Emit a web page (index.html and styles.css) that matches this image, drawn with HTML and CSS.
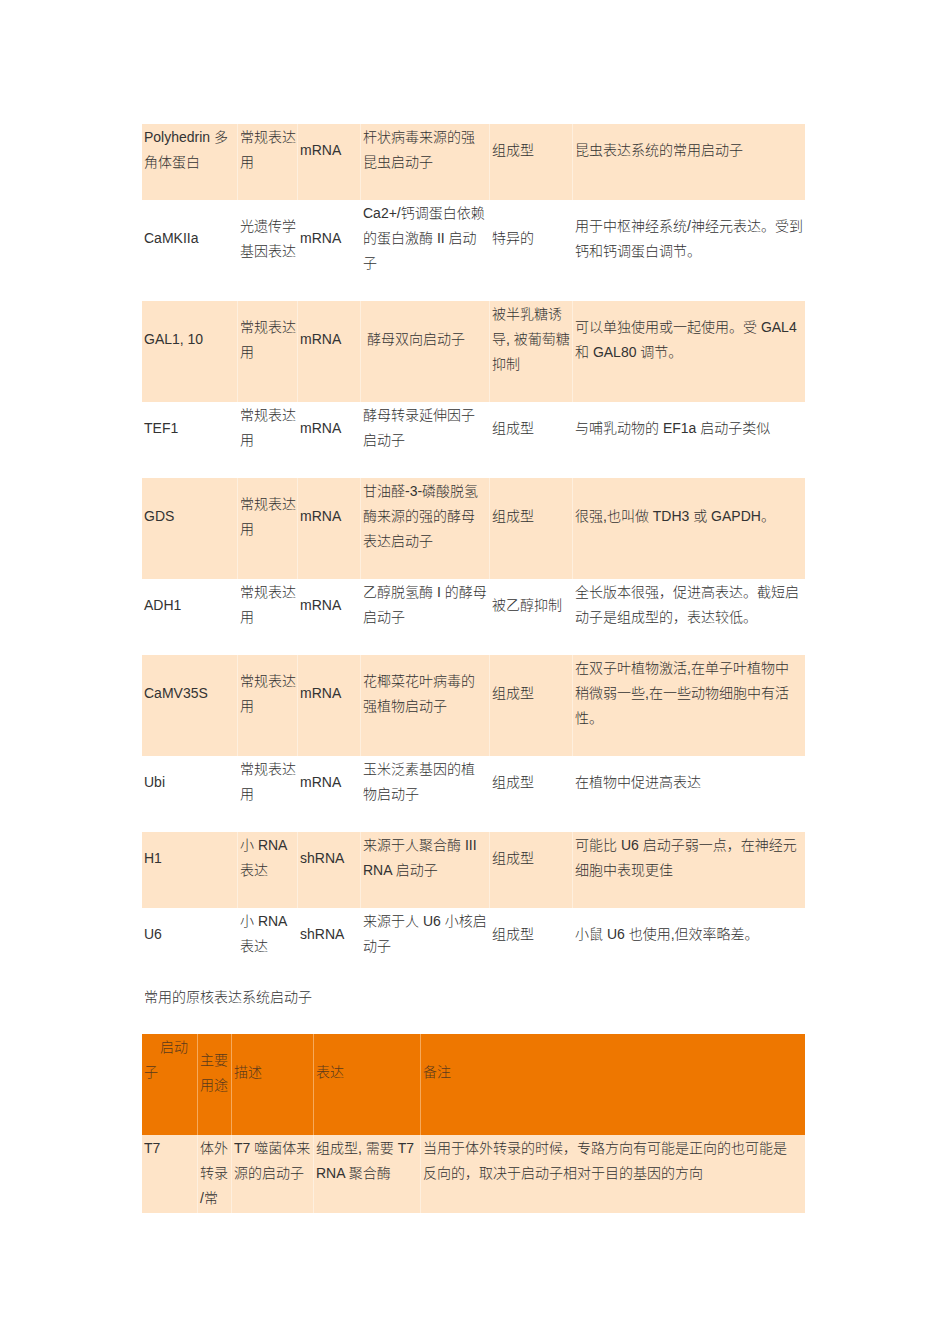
FILE: index.html
```html
<!DOCTYPE html>
<html lang="zh-CN">
<head>
<meta charset="utf-8">
<title>启动子</title>
<link rel="stylesheet" href="styles.css">
</head>
<body>
<div class="page">
  <table class="grid t1">
    <colgroup>
      <col class="w96"><col class="w60"><col class="w63"><col class="w129"><col class="w83"><col class="w232">
    </colgroup>
    <tr class="tint">
      <td>Polyhedrin 多<br>角体蛋白</td><td>常规表达<br>用</td><td>mRNA</td><td>杆状病毒来源的强<br>昆虫启动子</td><td>组成型</td><td>昆虫表达系统的常用启动子</td>
    </tr>
    <tr>
      <td>CaMKIIa</td><td>光遗传学<br>基因表达</td><td>mRNA</td><td>Ca2+/钙调蛋白依赖<br>的蛋白激酶 II 启动<br>子</td><td>特异的</td><td>用于中枢神经系统/神经元表达。受到<br>钙和钙调蛋白调节。</td>
    </tr>
    <tr class="tint">
      <td>GAL1, 10</td><td>常规表达<br>用</td><td>mRNA</td><td><span class="ind">酵母双向启动子</span></td><td>被半乳糖诱<br>导, 被葡萄糖<br>抑制</td><td>可以单独使用或一起使用。受 GAL4<br>和 GAL80 调节。</td>
    </tr>
    <tr>
      <td>TEF1</td><td>常规表达<br>用</td><td>mRNA</td><td>酵母转录延伸因子<br>启动子</td><td>组成型</td><td>与哺乳动物的 EF1a 启动子类似</td>
    </tr>
    <tr class="tint">
      <td>GDS</td><td>常规表达<br>用</td><td>mRNA</td><td>甘油醛-3-磷酸脱氢<br>酶来源的强的酵母<br>表达启动子</td><td>组成型</td><td>很强,也叫做 TDH3 或 GAPDH。</td>
    </tr>
    <tr>
      <td>ADH1</td><td>常规表达<br>用</td><td>mRNA</td><td>乙醇脱氢酶 I 的酵母<br>启动子</td><td>被乙醇抑制</td><td>全长版本很强，促进高表达。截短启<br>动子是组成型的，表达较低。</td>
    </tr>
    <tr class="tint">
      <td>CaMV35S</td><td>常规表达<br>用</td><td>mRNA</td><td>花椰菜花叶病毒的<br>强植物启动子</td><td>组成型</td><td>在双子叶植物激活,在单子叶植物中<br>稍微弱一些,在一些动物细胞中有活<br>性。</td>
    </tr>
    <tr>
      <td>Ubi</td><td>常规表达<br>用</td><td>mRNA</td><td>玉米泛素基因的植<br>物启动子</td><td>组成型</td><td>在植物中促进高表达</td>
    </tr>
    <tr class="tint">
      <td>H1</td><td>小 RNA<br>表达</td><td>shRNA</td><td>来源于人聚合酶 III<br>RNA 启动子</td><td>组成型</td><td>可能比 U6 启动子弱一点，在神经元<br>细胞中表现更佳</td>
    </tr>
    <tr>
      <td>U6</td><td>小 RNA<br>表达</td><td>shRNA</td><td>来源于人 U6 小核启<br>动子</td><td>组成型</td><td>小鼠 U6 也使用,但效率略差。</td>
    </tr>
  </table>

  <p class="caption">常用的原核表达系统启动子</p>

  <table class="grid t2">
    <colgroup>
      <col class="w56"><col class="w34"><col class="w82"><col class="w107"><col class="w384">
    </colgroup>
    <tr class="head">
      <td><span class="ind16">启动</span><br>子<br>&nbsp;</td><td>主要<br>用途</td><td>描述</td><td>表达</td><td>备注</td>
    </tr>
    <tr class="tint last">
      <td>T7</td><td>体外<br>转录<br>/常</td><td>T7 噬菌体来<br>源的启动子</td><td>组成型, 需要 T7<br>RNA 聚合酶</td><td>当用于体外转录的时候，专路方向有可能是正向的也可能是<br>反向的，取决于启动子相对于目的基因的方向</td>
    </tr>
  </table>
</div>
</body>
</html>
```

FILE: styles.css
```css
html, body {
  margin: 0;
  padding: 0;
  background: #ffffff;
}

body {
  font-family: "Liberation Sans", "Noto Sans CJK SC", sans-serif;
  font-size: 14px;
  font-weight: 300;
  line-height: 25px;
  color: #333333;
}

.page {
  padding: 124px 0 0 142px;
}

.grid {
  border-collapse: separate;
  border-spacing: 0;
  table-layout: fixed;
  width: 663px;
}

.grid td {
  padding: 1px 0 25px 2px;
  vertical-align: middle;
  white-space: nowrap;
  overflow: visible;
  border-right: 1px solid rgba(255, 255, 255, 0.4);
}

.grid td:last-child {
  border-right: none;
}

.tint td {
  background: #fee4c8;
}

.head td {
  background: #ee7700;
  color: #5a3a1c;
  border-right: 1px solid rgba(255, 230, 200, 0.45);
}

.head td:last-child {
  border-right: none;
}

.last td {
  vertical-align: top;
  padding-bottom: 2px;
}

.ind {
  padding-left: 4px;
}

.ind16 {
  padding-left: 16px;
}

.w96 { width: 96px; }
.w60 { width: 60px; }
.w63 { width: 63px; }
.w129 { width: 129px; }
.w83 { width: 83px; }
.w232 { width: 232px; }

.w56 { width: 56px; }
.w34 { width: 34px; }
.w82 { width: 82px; }
.w107 { width: 107px; }
.w384 { width: 384px; }

.caption {
  margin: 0 0 24px 2px;
  padding-top: 1px;
  line-height: 25px;
}
```
